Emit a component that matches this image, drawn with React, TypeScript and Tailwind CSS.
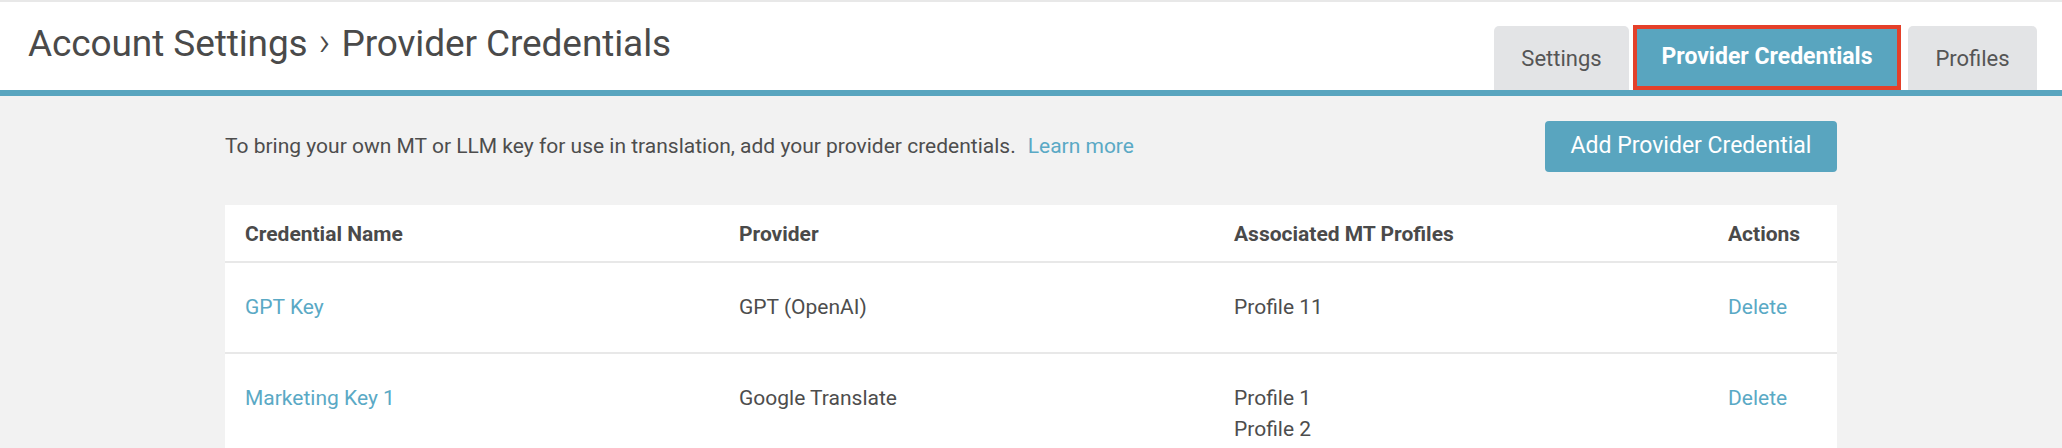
import React from "react";

const rows = [
  { name: "GPT Key", provider: "GPT (OpenAI)", profiles: ["Profile 11"] },
  { name: "Marketing Key 1", provider: "Google Translate", profiles: ["Profile 1", "Profile 2"] },
];

export default function App() {
  return (
    <div className="w-full h-[448px] overflow-hidden bg-[#f2f2f2] font-['Roboto',sans-serif] text-[#4d4d4d]">
      <div className="h-[2px] bg-[#e8e8e8]" />
      <div className="h-[88px] bg-white flex justify-between">
        <h1 className="pl-[28px] pt-[20px] text-[37px] leading-[44px] font-normal text-[#4a4a4a] tracking-[-0.1px] flex items-center self-start">
          <span>Account Settings</span>
          <span className="mx-[11px] text-[40px] font-light leading-[44px] relative -top-[2px]">&#8250;</span>
          <span>Provider Credentials</span>
        </h1>
        <div className="flex items-end pr-[25px]">
          <div className="w-[135px] h-[64px] rounded-t-[5px] bg-[#e3e4e6] flex items-center justify-center text-[22px] text-[#555555]">
            Settings
          </div>
          <div className="ml-[4px] w-[268px] h-[65px] border-[4px] border-[#e4402a] bg-[#59a5bf] flex items-center justify-center text-[23px] font-bold text-white">
            Provider Credentials
          </div>
          <div className="ml-[7px] w-[129px] h-[64px] rounded-t-[5px] bg-[#e3e4e6] flex items-center justify-center text-[22px] text-[#555555]">
            Profiles
          </div>
        </div>
      </div>
      <div className="h-[6px] bg-[#59a5bf]" />
      <div className="w-[1612px] mx-auto">
        <div className="mt-[25px] flex justify-between items-center">
          <p className="text-[21px] text-[#4d4d4d]">
            To bring your own MT or LLM key for use in translation, add your provider credentials.
            <span className="ml-[12px] text-[#5aa9c5]">Learn more</span>
          </p>
          <button className="w-[292px] h-[51px] rounded-[4px] bg-[#59a5bf] text-white text-[23px]">
            Add Provider Credential
          </button>
        </div>
        <div className="mt-[33px] bg-white">
          <div className="grid grid-cols-[494px_495px_494px_1fr] pl-[20px] pt-[14px] pb-[11px] text-[21px] leading-[31px] font-bold text-[#4a4a4a] border-b-[2px] border-[#e8e8e8]">
            <div>Credential Name</div>
            <div>Provider</div>
            <div>Associated MT Profiles</div>
            <div>Actions</div>
          </div>
          {rows.map((r) => (
            <div
              key={r.name}
              className="grid grid-cols-[494px_495px_494px_1fr] pl-[20px] py-[29px] text-[21px] leading-[31px] border-b-[2px] border-[#e8e8e8]"
            >
              <div className="text-[#5aa9c5]">{r.name}</div>
              <div>{r.provider}</div>
              <div className="flex flex-col">
                {r.profiles.map((p) => (
                  <span key={p}>{p}</span>
                ))}
              </div>
              <div className="text-[#5aa9c5]">Delete</div>
            </div>
          ))}
        </div>
      </div>
    </div>
  );
}
